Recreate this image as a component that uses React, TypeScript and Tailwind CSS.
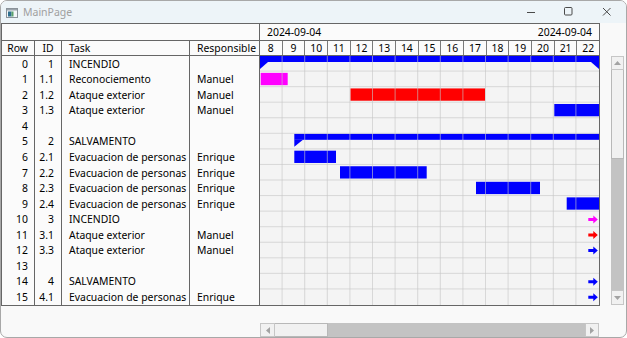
import React from 'react';

type Row = { row: number; id: string; task: string; resp: string };

const ROWS: Row[] = [
  { row: 0, id: '1', task: 'INCENDIO', resp: '' },
  { row: 1, id: '1.1', task: 'Reconociemento', resp: 'Manuel' },
  { row: 2, id: '1.2', task: 'Ataque exterior', resp: 'Manuel' },
  { row: 3, id: '1.3', task: 'Ataque exterior', resp: 'Manuel' },
  { row: 4, id: '', task: '', resp: '' },
  { row: 5, id: '2', task: 'SALVAMENTO', resp: '' },
  { row: 6, id: '2.1', task: 'Evacuacion de personas', resp: 'Enrique' },
  { row: 7, id: '2.2', task: 'Evacuacion de personas', resp: 'Enrique' },
  { row: 8, id: '2.3', task: 'Evacuacion de personas', resp: 'Enrique' },
  { row: 9, id: '2.4', task: 'Evacuacion de personas', resp: 'Enrique' },
  { row: 10, id: '3', task: 'INCENDIO', resp: '' },
  { row: 11, id: '3.1', task: 'Ataque exterior', resp: 'Manuel' },
  { row: 12, id: '3.3', task: 'Ataque exterior', resp: 'Manuel' },
  { row: 13, id: '', task: '', resp: '' },
  { row: 14, id: '4', task: 'SALVAMENTO', resp: '' },
  { row: 15, id: '4.1', task: 'Evacuacion de personas', resp: 'Enrique' },
];

const DAYS = [8, 9, 10, 11, 12, 13, 14, 15, 16, 17, 18, 19, 20, 21, 22];
const RH = 15.5625;
const DW = 22.6;
const CW = 339;

const BLUE = '#0000ff';
const RED = '#ff0000';
const PINK = '#ff00ff';

// task bars, x in chart coordinates
const BARS = [
  { row: 1, x: 0.7, w: 27, color: PINK },
  { row: 2, x: 90.4, w: 134.6, color: RED },
  { row: 3, x: 294.3, w: 44.7, color: BLUE },
  { row: 6, x: 34.3, w: 41.7, color: BLUE },
  { row: 7, x: 80, w: 86.7, color: BLUE },
  { row: 8, x: 216, w: 64, color: BLUE },
  { row: 9, x: 306.7, w: 32.3, color: BLUE },
];

const ARROWS = [
  { row: 10, color: PINK },
  { row: 11, color: RED },
  { row: 12, color: BLUE },
  { row: 14, color: BLUE },
  { row: 15, color: BLUE },
];

function TitleBar() {
  return (
    <div className="h-[22px] flex items-center bg-[#edf4f8] shrink-0">
      <svg width="12" height="10" viewBox="0 0 12 10" className="ml-[5px] mt-[1px]">
        <rect x="0.5" y="0.5" width="11" height="9" fill="#f4f6f8" stroke="#8a9299" />
        <rect x="1" y="1" width="10" height="1.5" fill="#9aa3ab" />
        <rect x="2" y="3.5" width="3.5" height="5" fill="#2f6f8f" />
        <rect x="5.5" y="3.5" width="2" height="5" fill="#5aa06a" />
      </svg>
      <span className="ml-[5px] text-[10.5px] text-[#a0a0a0]">MainPage</span>
      <div className="ml-auto flex items-center h-full">
        <svg width="12" height="12" viewBox="0 0 12 12" className="mr-[25px]">
          <line x1="1" y1="6.5" x2="9" y2="6.5" stroke="#4a4a4a" strokeWidth="1" />
        </svg>
        <svg width="12" height="12" viewBox="0 0 12 12" className="mr-[26px]">
          <rect x="1.5" y="1.5" width="7.5" height="7.5" rx="1" fill="none" stroke="#4a4a4a" strokeWidth="1" />
        </svg>
        <svg width="12" height="12" viewBox="0 0 12 12" className="mr-[13px]">
          <path d="M2 2 L9.5 9.5 M9.5 2 L2 9.5" stroke="#4a4a4a" strokeWidth="1" />
        </svg>
      </div>
    </div>
  );
}

function LeftTable() {
  return (
    <div className="w-[258px] border-r border-[#666] flex flex-col bg-[#fbfbfb]">
      <div className="h-[17px] border-b border-[#666]" />
      <div className="h-[15px] border-b border-[#666] flex">
        <div className="w-[33px] border-r border-[#666] flex items-center justify-end pr-[6px]">Row</div>
        <div className="w-[27px] border-r border-[#666] flex items-center justify-center">ID</div>
        <div className="w-[128px] border-r border-[#666] flex items-center pl-[7px]">Task</div>
        <div className="w-[69px] flex items-center pl-[7px]">Responsible</div>
      </div>
      {ROWS.map(r => (
        <div key={r.row} className="h-[15.5625px] flex">
          <div className="w-[33px] border-r border-[#666] flex items-center justify-end pr-[6px]">{r.row}</div>
          <div className="w-[27px] border-r border-[#666] flex items-center justify-end pr-[7px]">{r.id}</div>
          <div className="w-[128px] border-r border-[#666] flex items-center pl-[7px] whitespace-nowrap">{r.task}</div>
          <div className="w-[69px] flex items-center pl-[7px]">{r.resp}</div>
        </div>
      ))}
    </div>
  );
}

function Chart() {
  const H = RH * 16;
  const line = 'rgba(198,198,198,0.62)';
  return (
    <svg width={CW} height={H} className="block">
      <rect width={CW} height={H} fill="#f4f4f4" />

      {/* summary bars */}
      <rect x={0} y={0} width={CW} height={6} fill={BLUE} />
      <polygon points={`0,6 8,6 0,13`} fill={BLUE} />
      <polygon points={`${CW - 8},6 ${CW},6 ${CW},13`} fill={BLUE} />
      <rect x={34.3} y={RH * 5} width={CW - 34.3} height={6} fill={BLUE} />
      <polygon points={`34.3,${RH * 5 + 6} 43,${RH * 5 + 6} 34.3,${RH * 5 + 13}`} fill={BLUE} />

      {BARS.map((b, i) => (
        <rect key={i} x={b.x} y={b.row * RH + 1.3} width={b.w} height={12.3} fill={b.color} />
      ))}

      {ARROWS.map((a, i) => {
        const cy = a.row * RH + RH / 2;
        const x0 = 328.3;
        return (
          <path
            key={i}
            d={`M${x0} ${cy - 1.5} h5 v-2.5 l4.5 4 l-4.5 4 v-2.5 h-5 z`}
            fill={a.color}
          />
        );
      })}

      {DAYS.slice(1).map((_, k) => (
        <rect key={'v' + k} x={(k + 1) * DW - 1} y={0} width={1} height={H} fill={line} />
      ))}
      {ROWS.slice(1).map((_, j) => (
        <rect key={'h' + j} x={0} y={(j + 1) * RH - 1} width={CW} height={1} fill={line} />
      ))}
    </svg>
  );
}

function Gantt() {
  return (
    <div className="w-[339px] flex flex-col bg-[#fbfbfb]">
      <div className="h-[17px] border-b border-[#666] flex items-center justify-between px-[7px]">
        <span>2024-09-04</span>
        <span>2024-09-04</span>
      </div>
      <div className="h-[15px] border-b border-[#666] flex">
        {DAYS.map((d, i) => (
          <div
            key={d}
            className={`flex-1 flex items-center justify-center ${i < DAYS.length - 1 ? 'border-r border-[#7a7a7a]' : ''}`}
          >
            {d}
          </div>
        ))}
      </div>
      <Chart />
    </div>
  );
}

function VScroll() {
  return (
    <div className="ml-[11px] mt-[33px] w-[13px] h-[249px] flex flex-col bg-[#c3c3c3]">
      <div className="h-[14px] bg-[#f1f1f1] border border-[#c6c6c6] flex items-center justify-center">
        <svg width="7" height="4" viewBox="0 0 7 4"><polygon points="0,4 3.5,0 7,4" fill="#a3a3a3" /></svg>
      </div>
      <div className="h-[89px] bg-[#f1f1f1] border border-t-0 border-[#b8b8b8]" />
      <div className="flex-1" />
      <div className="h-[15px] bg-[#f1f1f1] border border-[#c6c6c6] flex items-center justify-center">
        <svg width="7" height="4" viewBox="0 0 7 4"><polygon points="0,0 7,0 3.5,4" fill="#a3a3a3" /></svg>
      </div>
    </div>
  );
}

function HScroll() {
  return (
    <div className="ml-[259px] mt-[17px] w-[339px] h-[14px] flex bg-[#c3c3c3] shrink-0">
      <div className="w-[15px] bg-[#f1f1f1] border border-[#c6c6c6] flex items-center justify-center">
        <svg width="4" height="7" viewBox="0 0 4 7"><polygon points="4,0 0,3.5 4,7" fill="#a3a3a3" /></svg>
      </div>
      <div className="w-[53px] bg-[#f1f1f1] border border-l-0 border-[#b8b8b8]" />
      <div className="flex-1" />
      <div className="w-[14px] bg-[#f1f1f1] border border-[#c6c6c6] flex items-center justify-center">
        <svg width="4" height="7" viewBox="0 0 4 7"><polygon points="0,0 4,3.5 0,7" fill="#a3a3a3" /></svg>
      </div>
    </div>
  );
}

export default function App() {
  return (
    <div className="w-[627px] h-[338px] overflow-hidden bg-white font-['Noto_Sans',sans-serif] text-[10.4px] leading-none text-black">
      <div className="w-full h-full flex flex-col border border-[#a8a8a8] rounded-[7px] overflow-hidden bg-[#f9f9f9]">
        <TitleBar />
        <div className="flex items-start shrink-0">
          <div className="flex border border-[#666]">
            <LeftTable />
            <Gantt />
          </div>
          <VScroll />
        </div>
        <HScroll />
      </div>
    </div>
  );
}
